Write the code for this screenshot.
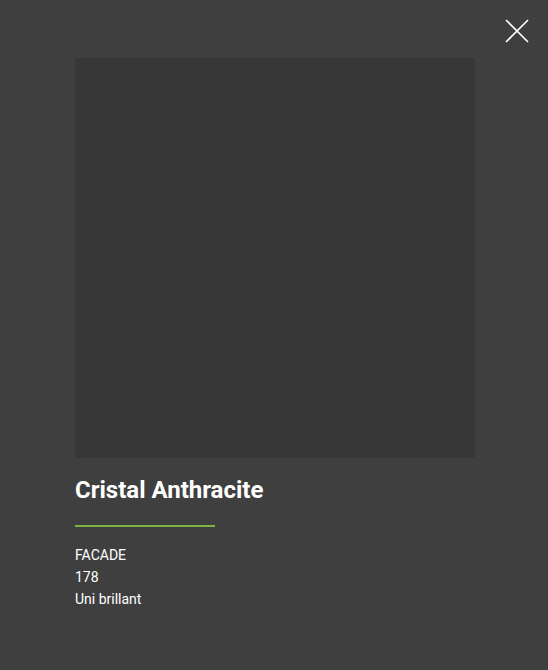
export default function App() {
  return (
    <div className="relative h-[670px] w-[548px] bg-[#3f3f3f] font-['Roboto',sans-serif] text-white">
      <button className="absolute right-[19px] top-[19px] h-[24px] w-[24px]" aria-label="Fermer">
        <svg viewBox="0 0 24 24" width="24" height="24" fill="none" stroke="#ffffff" strokeWidth="1.6">
          <path d="M1 1L23 23M23 1L1 23" />
        </svg>
      </button>
      <div className="px-[75px] pt-[58px]">
        <div className="h-[400px] w-[400px] bg-[#373737]" />
        <h1 className="mt-[18px] text-[24px] font-bold leading-[29px]">Cristal Anthracite</h1>
        <div className="mt-[20px] h-[2px] w-[140px] bg-[#7cb342]" />
        <div className="mt-[17px] text-[14px] leading-[22px]">
          <p>FACADE</p>
          <p>178</p>
          <p>Uni brillant</p>
        </div>
      </div>
    </div>
  );
}
